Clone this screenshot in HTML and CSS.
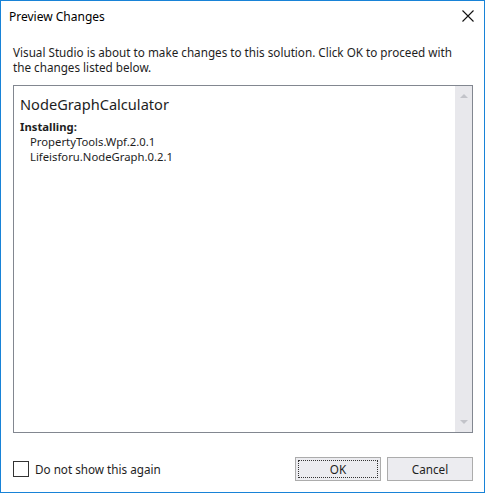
FILE: index.html
```html
<!DOCTYPE html>
<html>
<head>
<meta charset="utf-8">
<link rel="stylesheet" href="styles.css">
</head>
<body>
<div class="window">
  <div class="titlebar">
    <span class="title">Preview Changes</span>
    <span class="close">
      <svg width="12" height="12" viewBox="0 0 12 12"><path d="M0.5 0.5 L11.5 11.5 M11.5 0.5 L0.5 11.5" stroke="#111" stroke-width="1.1" fill="none"/></svg>
    </span>
  </div>
  <div class="content">
    <p class="intro">Visual Studio is about to make changes to this solution. Click OK to proceed with the changes listed below.</p>
    <div class="listbox">
      <div class="list-inner">
        <div class="project">NodeGraphCalculator</div>
        <div class="section">Installing:</div>
        <div class="item">PropertyTools.Wpf.2.0.1</div>
        <div class="item">Lifeisforu.NodeGraph.0.2.1</div>
      </div>
      <div class="scrollbar">
        <span class="arrow up"></span>
        <span class="arrow down"></span>
      </div>
    </div>
    <div class="footer">
      <label class="check"><span class="box"></span><span>Do not show this again</span></label>
      <div class="buttons">
        <button class="btn default"><span class="focus">OK</span></button>
        <button class="btn">Cancel</button>
      </div>
    </div>
  </div>
</div>
</body>
</html>
```
FILE: styles.css
```css
html, body {
  margin: 0;
  padding: 0;
  background: #ffffff;
}
.window {
  box-sizing: border-box;
  width: 485px;
  height: 493px;
  border: 1px solid #1883d7;
  display: flex;
  flex-direction: column;
  font-family: "Noto Sans", "Open Sans", sans-serif;
  font-size: 12px;
  color: #1e1e1e;
}
.titlebar {
  height: 30px;
  display: flex;
  align-items: center;
  justify-content: space-between;
  padding: 0 7px 0 8px;
  flex-shrink: 0;
}
.title {
  color: #000;
  font-size: 12px;
}
.close {
  width: 14px;
  height: 14px;
  display: flex;
  align-items: center;
  justify-content: center;
  margin-right: 2px;
}
.content {
  flex: 1;
  display: flex;
  flex-direction: column;
  padding: 14px 11px 11px 12px;
}
.intro {
  margin: 0;
  width: 446px;
  font-size: 11.7px;
  line-height: 15px;
  color: #1e1e1e;
}
.listbox {
  margin-top: 10px;
  height: 348px;
  box-sizing: border-box;
  border: 1px solid #828790;
  display: flex;
}
.list-inner {
  flex: 1;
  padding: 7px 6px 5px;
}
.project {
  font-size: 14.6px;
  line-height: 22px;
  color: #1e1e1e;
}
.section {
  font-weight: bold;
  font-size: 11.3px;
  margin-top: 4px;
  line-height: 15px;
}
.item {
  padding-left: 10px;
  font-size: 11.3px;
  line-height: 15px;
}
.scrollbar {
  width: 17px;
  background: #e8e8ec;
  display: flex;
  flex-direction: column;
  justify-content: space-between;
  align-items: center;
  padding: 8px 0 8px;
}
.arrow {
  width: 0;
  height: 0;
  border-left: 4px solid transparent;
  border-right: 4px solid transparent;
}
.arrow.up {
  border-bottom: 4px solid #c2c3c9;
}
.arrow.down {
  border-top: 4px solid #c2c3c9;
}
.footer {
  margin-top: auto;
  display: flex;
  align-items: center;
  justify-content: space-between;
}
.check {
  display: flex;
  align-items: center;
  gap: 6px;
  color: #1e1e1e;
  font-size: 11.7px;
}
.box {
  width: 14px;
  height: 14px;
  border: 1px solid #333333;
  background: #fff;
}
.buttons {
  display: flex;
  gap: 6px;
}
.btn {
  width: 86px;
  height: 24px;
  box-sizing: border-box;
  border: 1px solid #acacac;
  background: #ececf0;
  font-family: "Noto Sans", "Open Sans", sans-serif;
  font-size: 11.7px;
  color: #1e1e1e;
  padding: 2px;
  display: flex;
  align-items: center;
  justify-content: center;
}
.focus {
  flex: 1;
  align-self: stretch;
  border: 1px dotted #333;
  display: flex;
  align-items: center;
  justify-content: center;
}
```
